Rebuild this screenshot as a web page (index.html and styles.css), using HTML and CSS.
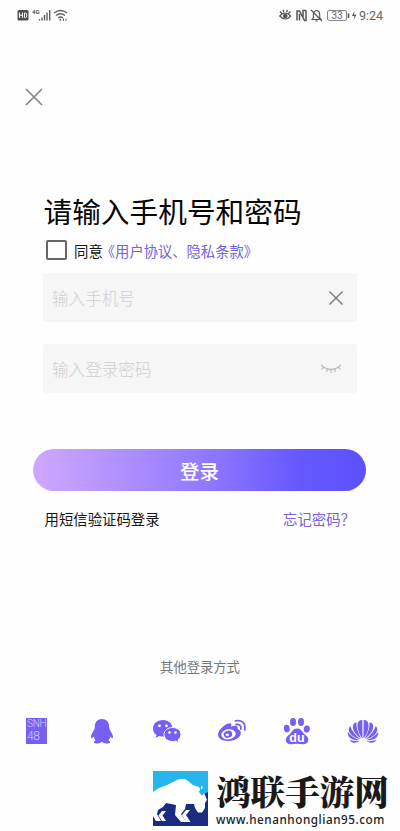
FILE: index.html
```html
<!DOCTYPE html>
<html lang="zh-CN">
<head>
<meta charset="utf-8">
<title>登录</title>
<link rel="stylesheet" href="styles.css">
</head>
<body>
<header class="status">
  <div class="status-left">
    <svg width="52" height="14" viewBox="0 0 52 14">
      <rect x="0.5" y="1" width="11" height="10.5" rx="1.5" fill="#505050"/>
      <path d="M2.500 3.500V9M5.500 3.500V9M2.500 6.200h3M7.500 4v4.500h1q1.300 0 1.300-2.200t-1.300-2.300z" fill="none" stroke="#fff" stroke-width="1"/>
      <text x="15" y="5" class="net">4G</text>
      <path d="M22.500 11.500v-1.500M25 11.500v-3M27.500 11.500V6M30 11.500V3.500M32.700 11.500V1" stroke="#606060" stroke-width="1.400"/>
      <g fill="none" stroke="#606060" stroke-width="1.300"><path d="M37 4q6.500-5 13 0M39 6.500q4.500-3.500 9 0M41 9q2.500-2 5 0"/></g>
      <circle cx="43.300" cy="10.700" r="1" fill="#606060"/>
      <path d="M46.500 9.500v2.500M49 9.500v2.500" stroke="#606060"/>
    </svg>
  </div>
  <div class="status-right">
    <svg width="78" height="14" viewBox="0 1 78 14" fill="none" stroke="#555">
      <path d="M.7 8q5.300-6 11 0q-5.300 6-11 0zM1 3.500l2 2M4 1.800l.8 2.400M8.400 1.800l-.8 2.400M11.500 3.500l-2 2" stroke-width="1.200"/>
      <circle cx="6.200" cy="8" r="1.900" fill="#555"/>
      <path d="M18 12.500V3h2.500L25.500 12.500h1.500V2.500M20.500 12.500V6M24 9V2.500h3" stroke-width="1.500"/>
      <path d="M33 11.500h9l-1.300-2V6q0-3-3-3.500q-3.300.500-3.300 4v3zM36.300 13h2.500M32 2l11 11" stroke-width="1.100"/>
      <rect x="48.500" y="2.500" width="19" height="10" rx="1.500" stroke="#888"/>
      <path d="M69.500 5.500v4.500" stroke-width="1.600"/>
      <text x="58" y="11.200" class="battery">33</text>
      <path d="M75.500 3l-2.500 5h2.500l-1 4 3-5.200h-2.500z" fill="#555" stroke="none"/>
    </svg>
    <span class="time">9:24</span>
  </div>
</header>

<main>
  <svg class="close" width="18" height="18" viewBox="0 0 18 18"><path d="M1 1l16 16M17 1L1 17" stroke="#858585" stroke-width="1.700"/></svg>
  <h1>请输入手机号和密码</h1>
  <div class="agree"><span class="box"></span><span>同意</span><span class="accent terms">《用户协议、隐私条款》</span></div>
  <div class="field"><span>输入手机号</span>
    <svg class="clear" width="16" height="16" viewBox="0 0 16 16"><path d="M1.500 1.500l13 13M14.500 1.500l-13 13" stroke="#777" stroke-width="1.400"/></svg>
  </div>
  <div class="field"><span>输入登录密码</span>
    <svg class="eye" width="22" height="12" viewBox="0 0 22 12"><path d="M1 2q10 9 20 0M3.500 4L1.500 6.500M7.500 6.200L6.500 9M11 6.700V10M14.500 6.200l1 2.800M18.500 4l2 2.500" fill="none" stroke="#bcbcbc" stroke-width="1.200"/></svg>
  </div>
  <div class="submit">登录</div>
  <div class="links"><span>用短信验证码登录</span><span class="accent">忘记密码？</span></div>
</main>

<section class="other">
  <p>其他登录方式</p>
  <div class="providers">
    <div class="snh"><span>SNH</span><span>48</span></div>
    <svg width="24" height="28" viewBox="0 0 24 28"><path d="M12 2C6.800 2 4.700 5.600 4.800 10.500C4.800 13 1.500 16 1 19.500q-.1 2.300 1 1.700l1.700-1.800q.5 2.300 2 3.800q-2 1-1.700 2.300C4.500 27 10 27 12 24.800C14 27 19.500 27 20 25.500q.3-1.300-1.700-2.300q1.500-1.500 2-3.800l1.700 1.800q1.100.600 1-1.700C22.500 16 19.200 13 19.200 10.500C19.300 5.600 17.200 2 12 2z" fill="#7560f3"/></svg>
    <svg width="30" height="28" viewBox="0 0 30 28"><path d="M11 3C5 3 1 6.800 1 11.500q0 4 3.500 6.500l-1 3 3.800-2q2 .600 4.300.600C17 19.500 20.500 16 20.500 11.500S16.500 3 11 3z" fill="#7560f3"/><path d="M20.500 10.500c-5 0-8.500 3.200-8.500 7s3.500 7 8.500 7q1.700 0 3.300-.5l3 1.700-.8-2.700q3-2.200 3-5.500c0-3.800-3.500-7-8.500-7z" fill="#7560f3" stroke="#fff"/><g fill="#fff"><circle cx="7.500" cy="8.800" r="1.400"/><circle cx="14.500" cy="8.800" r="1.400"/><circle cx="17.500" cy="15.500" r="1.200"/><circle cx="23.500" cy="15.500" r="1.200"/></g></svg>
    <svg width="30" height="28" viewBox="0 0 30 28"><path d="M11.500 6.500C15 5.500 14.500 8.500 14 9.800c4-1.800 7.800-1.300 6.500 2.200c7 2.500 2.500 11.500-8.500 12C5.500 24.300 1 21.500 1 17.800C1 13.500 7 7.500 11.500 6.500z" fill="#7560f3"/><ellipse cx="11.500" cy="17.200" rx="7.300" ry="5" transform="rotate(-8 11.500 17.200)" fill="#fff"/><ellipse cx="11" cy="17.300" rx="4.300" ry="3.500" transform="rotate(-20 11 17.300)" fill="#7560f3"/><ellipse cx="10.300" cy="17.800" rx="1.700" ry="1.300" fill="#fff"/><path d="M18.500 3.800q10.500-1.500 9.300 9M19 7.500q5.500-.5 4.900 4.500" fill="none" stroke="#7560f3" stroke-width="1.800" stroke-linecap="round"/></svg>
    <svg width="28" height="28" viewBox="0 0 28 28"><g fill="#7560f3"><ellipse cx="10" cy="5" rx="3" ry="4"/><ellipse cx="18" cy="5" rx="3" ry="4"/><ellipse cx="3.800" cy="11.500" rx="2.900" ry="3.800" transform="rotate(-10 3.800 11.500)"/><ellipse cx="23.800" cy="12" rx="3" ry="3.600" transform="rotate(10 23.800 12)"/><path d="M14 11.500c-4.500 0-5 4.200-8 6.300C.8 21.500 2.500 27.500 8 27.300q6-.9 12 0c6 .2 7-6 2.500-9.300C19.500 16 18.500 11.500 14 11.500z"/></g><text x="14" y="25" class="du">du</text></svg>
    <svg width="32" height="28" viewBox="0 0 32 28" fill="#7560f3">
      <g id="petals">
      <path d="M15.500 21.500C10.500 15.500 9 7 12 4q1.500-1.200 3.300-1z"/>
      <path d="M14.300 21.800C8.500 18 4.500 12 6.200 7.500q.8-1.800 3.300-2.300C9 11 11.500 16.500 14.300 21.800z"/>
      <path d="M13.300 22.300C6.500 20.500 2 17 1.700 12.500q0-2 1.500-3.500C5 14 8.500 18.500 13.300 22.300z"/>
      <path d="M12.800 23.200C6 23.700 1 21 .8 16.500v-1.500C4 19 8 21.500 12.800 23.200zM12.500 24q-3.500 2.800-7.500 1.200-1.800-.7-2.500-2.200Q7.500 24.500 12.500 24z"/>
      </g>
      <use href="#petals" transform="translate(32 0) scale(-1 1)"/>
    </svg>
  </div>
</section>

<footer class="brand">
  <svg width="55" height="55" viewBox="0 0 55 55">
    <path fill="#25b5ea" d="M0 0h55v32H0z"/><path fill="#192c80" d="M0 32h55v23H0z"/>
    <path fill="#192c80" d="M51 23l4-2v12h-4z"/>
    <path fill="#fff" d="M0 21L5 17.500L14 14L24 9Q31 6 35 10L40 14L46 16L49 20L51 22L54 29L52 32V37L49 41.500H45L42 37L41 33H33L32 38L28 43L33 51H28L22 44L23 34L13 32L10 36L5 39L4 43L8 50H3L0 45z"/>
    <path fill="#fff" d="M9 40h4l-3.500 4.500L13 50H9l-3.500-5.500zM33 39h4l-4 5 4.500 7H33l-4-7z"/>
    <path fill="#25b5ea" d="M48 12l3 3-1 3 2 3-3 4-3-4 1-3-1-3z"/>
    <path fill="#fff" d="M48.500 14.500l1.200 1.500-1 2.500-1-1z"/>
  </svg>
  <div class="brand-text"><strong>鸿联手游网</strong><span>www.henanhonglian95.com</span></div>
</footer>
</body>
</html>
```

FILE: styles.css
```css
* { box-sizing: border-box; }
body {
  margin: 0;
  width: 400px;
  height: 831px;
  overflow: hidden;
  background: #fefefe;
  color: #151515;
  font-family: "Noto Sans CJK SC", sans-serif;
  display: flex;
  flex-direction: column;
}
svg { display: block; flex: none; }
.status {
  height: 32px;
  padding: 0 17px;
  display: flex;
  justify-content: space-between;
  align-items: center;
}
.status-right { display: flex; align-items: center; gap: 2px; }
.net { font: bold 6px Roboto, sans-serif; fill: #505050; }
.battery { font: 10px Roboto, sans-serif; fill: #666; stroke: none; text-anchor: middle; }
.time { font: 12.500px/14px Roboto, sans-serif; color: #666; }
main { padding: 56px 34px 0 33px; }
.close { margin-left: -8px; }
h1 {
  margin: 83px 0 0 10.500px;
  font-size: 28.700px;
  line-height: 44px;
  font-weight: 400;
  color: #050505;
  white-space: nowrap;
}
.agree {
  display: flex;
  align-items: center;
  margin: 7px 0 0 13px;
  height: 20px;
  font-size: 14.400px;
  white-space: nowrap;
}
.terms { font-size: 14.300px; margin-left: -2px; }
.box {
  width: 21px;
  height: 20px;
  border: 2px solid #666;
  border-radius: 2px;
  margin-right: 7px;
}
.accent { color: #7562dc; }
.field {
  display: flex;
  align-items: center;
  justify-content: space-between;
  width: 314px;
  height: 49px;
  margin: 13px 0 0 10px;
  padding: 0 13px 0 9px;
  border-radius: 3px;
  background: #f6f6f6;
  color: #cfcfcf;
  font-size: 16.600px;
  font-weight: 300;
}
.field + .field { margin-top: 22px; padding-right: 15px; }
.submit {
  height: 42px;
  margin-top: 56px;
  border-radius: 21px;
  background: linear-gradient(90deg, #cfa8ff, #937bff 50%, #6558ff 80%, #5b51fc);
  color: #fff;
  font-size: 19.500px;
  font-weight: 500;
  line-height: 43px;
  text-align: center;
}
.links {
  display: flex;
  justify-content: space-between;
  margin: 18px 11px 0 11.500px;
  font-size: 14.400px;
  line-height: 20px;
}
.other p {
  margin: 128px 0 0;
  font-size: 13.300px;
  line-height: 20px;
  color: #777;
  text-align: center;
}
.providers {
  display: grid;
  grid-template-columns: repeat(6, 65.200px);
  justify-items: center;
  align-items: center;
  margin: 40px 0 0 4px;
}
.snh {
  width: 21px;
  height: 26px;
  padding-left: 1px;
  display: flex;
  flex-direction: column;
  background: #7560f3;
  color: #d5ccff;
  font: 300 10px/12px Roboto, sans-serif;
  letter-spacing: -.3px;
}
.snh span + span { font-size: 12px; letter-spacing: -.5px; }
.du { font: bold 12.500px "Liberation Sans", sans-serif; fill: #fff; text-anchor: middle; }
.brand { display: flex; gap: 8px; margin: 26px 0 0 153px; }
.brand-text { display: flex; flex-direction: column; white-space: nowrap; }
.brand strong {
  font-family: "Noto Serif CJK SC", "Noto Sans CJK SC", serif;
  font-size: 34.600px;
  line-height: 38px;
  font-weight: 900;
  color: #191919;
}
.brand-text span {
  margin-top: 3px;
  font: 500 11.700px/14px "Noto Sans", sans-serif;
  letter-spacing: .55px;
  color: #222;
}
```
